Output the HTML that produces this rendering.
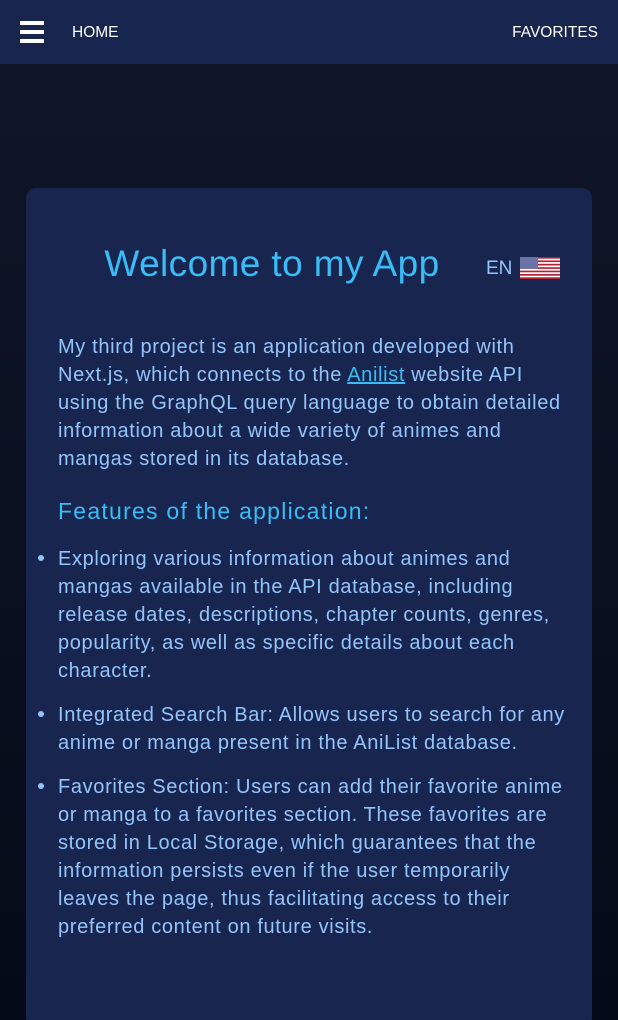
<!DOCTYPE html>
<html><head><meta charset="utf-8"><style>
*{margin:0;padding:0;box-sizing:border-box}
html,body{width:618px;height:1020px;overflow:hidden}
body{background:linear-gradient(#0f1729,#050a18);font-family:"Liberation Sans",sans-serif;position:relative}
nav{position:absolute;top:0;left:0;width:618px;height:64px;background:#18264f}
.hb{position:absolute;left:20px;width:24px;height:4px;background:#fff}
.nl{position:absolute;top:24px;color:#fff;font-size:15.5px}
.card{position:absolute;left:26px;top:188px;width:566px;height:840px;background:#18264f;border-radius:10px}
h1{position:absolute;left:0;width:492px;text-align:center;top:55px;font-size:37px;font-weight:normal;color:#38bdf8;letter-spacing:0.4px}
.en{position:absolute;left:460px;top:70px;color:#93c5fd;font-size:19px}
.flag{position:absolute;left:494px;top:69px;width:40px;height:22px}
.t{position:absolute;left:32px;color:#93c5fd;font-size:20px;letter-spacing:0.65px;line-height:28px;white-space:nowrap}
.t a{color:#38bdf8;text-decoration:underline}
h2{position:absolute;left:32px;top:310px;font-size:23px;letter-spacing:1.25px;font-weight:normal;color:#38bdf8}
.dot{position:absolute;left:12px;width:6px;height:6px;border-radius:3px;background:#93c5fd}
</style></head><body>
<nav>
<div class="hb" style="top:21px"></div><div class="hb" style="top:30px"></div><div class="hb" style="top:39px"></div>
<div class="nl" style="left:72px">HOME</div>
<div class="nl" style="right:20px">FAVORITES</div>
</nav>
<div class="card">
<h1>Welcome to my App</h1>
<div class="en">EN</div>
<svg class="flag" viewBox="0 0 40 22">
<rect width="40" height="22" fill="#fff"/>
<g fill="#b22234"><rect y="0" width="40" height="1.7"/><rect y="3.4" width="40" height="1.7"/><rect y="6.8" width="40" height="1.7"/><rect y="10.2" width="40" height="1.7"/><rect y="13.6" width="40" height="1.7"/><rect y="17" width="40" height="1.7"/><rect y="20.3" width="40" height="1.7"/></g>
<rect width="18" height="11.9" fill="#6b74a8"/>
</svg>
<div class="t" style="top:145px">My third project is an application developed with<br>Next.js, which connects to the <a>Anilist</a> website API<br>using the GraphQL query language to obtain detailed<br>information about a wide variety of animes and<br>mangas stored in its database.</div>
<h2>Features of the application:</h2>
<div class="dot" style="top:367px"></div>
<div class="t" style="top:357px">Exploring various information about animes and<br>mangas available in the API database, including<br>release dates, descriptions, chapter counts, genres,<br>popularity, as well as specific details about each<br>character.</div>
<div class="dot" style="top:523px"></div>
<div class="t" style="top:513px">Integrated Search Bar: Allows users to search for any<br>anime or manga present in the AniList database.</div>
<div class="dot" style="top:595px"></div>
<div class="t" style="top:585px">Favorites Section: Users can add their favorite anime<br>or manga to a favorites section. These favorites are<br>stored in Local Storage, which guarantees that the<br>information persists even if the user temporarily<br>leaves the page, thus facilitating access to their<br>preferred content on future visits.</div>
</div>
</body></html>
